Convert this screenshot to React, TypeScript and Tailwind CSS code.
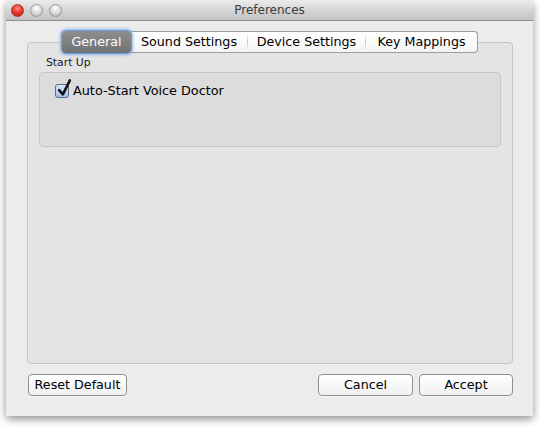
import React from "react";

const font = { fontFamily: '"DejaVu Sans", "Liberation Sans", Arial, sans-serif' };

function Light({ red }: { red?: boolean }) {
  return (
    <div
      className={
        red
          ? "w-[13px] h-[13px] rounded-full border border-[#a8322c] bg-[radial-gradient(circle_at_50%_30%,#ff8f86_0%,#ee3b2f_45%,#b3130d_100%)]"
          : "w-[13px] h-[13px] rounded-full border border-[#9a9a9a] bg-[radial-gradient(circle_at_50%_30%,#ffffff_0%,#dcdcdc_50%,#a9a9a9_100%)]"
      }
    />
  );
}

function Tab({ label, selected, last, w }: { label: string; selected?: boolean; last?: boolean; w: string }) {
  if (selected) {
    return (
      <div className={"h-[22px] flex items-center justify-center rounded-[4px] bg-[linear-gradient(#8e8e8e,#727272)] text-white text-[12.7px] shadow-[0_0_0_1px_#6c9ade,0_0_3px_2px_#8fb5ee] z-10 relative " + w}>
        {label}
      </div>
    );
  }
  return (
    <div
      className={
        "h-[22px] flex items-center justify-center bg-[linear-gradient(#ffffff,#f4f4f4)] text-[12.7px] text-black border-y border-[#9e9e9e] " +
        (last ? "border-r rounded-r-[4px] " : "border-r-0 ") +
        w
      }
    >
      {label}
    </div>
  );
}

function Sep() {
  return <div className="w-px h-[22px] bg-[linear-gradient(#ffffff,#c8c8c8,#ffffff)] border-y border-[#9e9e9e]" />;
}

function Button({ label, w }: { label: string; w: string }) {
  return (
    <button
      className={
        "h-[22px] rounded-[4px] border border-[#8f8f8f] bg-[linear-gradient(#ffffff,#f0f0f0)] text-[12.7px] text-black leading-none shadow-[0_1px_0_rgba(255,255,255,0.6)] " +
        w
      }
    >
      {label}
    </button>
  );
}

export default function App() {
  return (
    <div className="w-[540px] h-[427px] bg-white pl-[6px] pr-[7px]" style={font}>
      <div className="w-[527px] h-[416px] flex flex-col bg-[#ececec] shadow-[0_3px_8px_rgba(0,0,0,0.45)] rounded-t-[4px] overflow-hidden">
        {/* Title bar */}
        <div className="h-[21px] shrink-0 relative flex items-center bg-[linear-gradient(#ebebeb,#d2d2d2_60%,#c2c2c2)] border-b border-[#8f8f8f]">
          <div className="flex gap-[6px] pl-[5px]">
            <Light red />
            <Light />
            <Light />
          </div>
          <div className="absolute inset-0 flex items-center justify-center text-[12px] text-[#3a3a3a]">Preferences</div>
        </div>

        {/* Content */}
        <div className="flex-1 flex flex-col pl-[21px] pr-[20px] pt-[10px] pb-[20px]">
          {/* Tabs */}
          <div className="flex justify-center relative z-10 h-[22px]">
            <div className="flex items-center">
              <Tab label="General" selected w="w-[69px]" />
              <Tab label="Sound Settings" w="w-[116px]" />
              <Sep />
              <Tab label="Device Settings" w="w-[117px]" />
              <Sep />
              <Tab label="Key Mappings" last w="w-[112px]" />
            </div>
          </div>
          <div className="-mt-[11px] flex-1 rounded-[4px] border border-[#c4c4c4] bg-[#e4e4e4] px-[11px] pt-[13px]">
            <div className="text-[10.8px] text-[#1a1a1a] pl-[7px] leading-[13px] mb-[3px]">Start Up</div>
            <div className="h-[75px] rounded-[4px] border border-[#c6c6c6] bg-[#dcdcdc] pt-[8px] pl-[15px]">
              <div className="flex items-center gap-[4px]">
                <div className="w-[14px] h-[14px] rounded-[3px] border border-[#5a6a8a] bg-[linear-gradient(#dbe7f8,#9fc0ea)] relative">
                  <svg viewBox="0 0 14 14" className="absolute -top-[4px] left-[1px] w-[15px] h-[16px] overflow-visible">
                    <path d="M2 8 L5.5 12 L12 -1" fill="none" stroke="#111" strokeWidth="2.4" strokeLinecap="round" strokeLinejoin="round" />
                  </svg>
                </div>
                <span className="text-[12.8px] text-black">Auto-Start Voice Doctor</span>
              </div>
            </div>
          </div>
          {/* Buttons */}
          <div className="flex items-center mt-[10px]">
            <Button label="Reset Default" w="w-[99px] ml-[1px]" />
            <div className="flex-1" />
            <Button label="Cancel" w="w-[95px]" />
            <Button label="Accept" w="w-[94px] ml-[6px]" />
          </div>
        </div>
      </div>
    </div>
  );
}
